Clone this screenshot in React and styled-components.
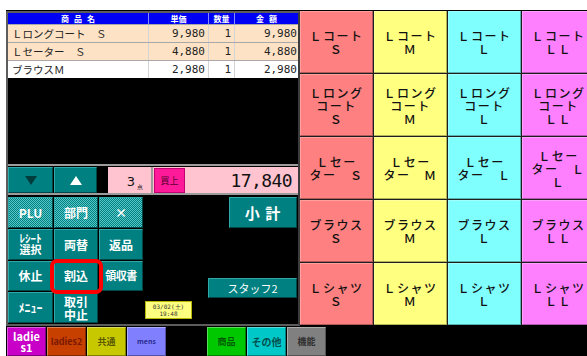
import React from 'react';
import styled, { createGlobalStyle } from 'styled-components';

const GlobalStyle = createGlobalStyle`
  html, body {
    margin: 0;
    padding: 0;
    background: #fff;
    overflow: hidden;
  }
  body {
    font-family: "Noto Sans CJK JP", "Noto Sans", sans-serif;
  }
`;

const items = [
  { name: 'Ｌロングコート　Ｓ', price: '9,980', qty: '1', total: '9,980', bg: '#fde2c6' },
  { name: 'Ｌセーター　Ｓ', price: '4,880', qty: '1', total: '4,880', bg: '#fde2c6' },
  { name: 'ブラウスＭ', price: '2,980', qty: '1', total: '2,980', bg: '#fff' },
];

const sizes = ['Ｓ', 'Ｍ', 'Ｌ', 'ＬＬ'];
const colColors = ['#ff8080', '#ffff80', '#80ffff', '#ff80ff'];

const productLabel = (row, size) => {
  if (row === 0) return `Ｌコート\n${size}`;
  if (row === 1) return `Ｌロング\nコート\n${size}`;
  if (row === 2) return size === 'ＬＬ' ? 'Ｌセー\nター　Ｌ\nＬ' : `Ｌセー\nター　${size}`;
  if (row === 3) return `ブラウス\n${size}`;
  return `Ｌシャツ\n${size}`;
};

const keys = [
  { label: 'PLU', dither: true },
  { label: '部門', dither: true },
  { label: '×', dither: true },
  { label: 'ﾚｼｰﾄ\n選択', small: true },
  { label: '両替' },
  { label: '返品' },
  { label: '休止' },
  { label: '割込', marked: true },
  { label: '領収書', tight: true },
  { label: 'ﾒﾆｭｰ' },
  { label: '取引\n中止' },
];

const tabs = [
  { label: 'ladie\ns1', bg: '#c800c8', fg: '#fff', size: 11 },
  { label: 'ladies2', bg: '#c84000', fg: '#7a1800', size: 9 },
  { label: '共通', bg: '#c8c800', fg: '#5a5a00', size: 9 },
  { label: 'mens', bg: '#8080ff', fg: '#2a2a90', size: 7 },
  { empty: true },
  { label: '商品', bg: '#00c800', fg: '#005a00', size: 9 },
  { label: 'その他', bg: '#00c8c8', fg: '#005050', size: 10 },
  { label: '機能', bg: '#808080', fg: '#2e2e2e', size: 9 },
];

const App = () => {
  return (
    <>
      <GlobalStyle />
      <Screen>
        <Frame>
          <Main>
            <LeftPanel>
              <Table>
                <HeaderRow>
                  <HeadCell wide>商品名</HeadCell>
                  <HeadCell>単価</HeadCell>
                  <HeadCell>数量</HeadCell>
                  <HeadCell wide>金額</HeadCell>
                </HeaderRow>
                {items.map((item) => (
                  <ItemRow key={item.name} bg={item.bg}>
                    <NameCell>{item.name}</NameCell>
                    <NumCell>{item.price}</NumCell>
                    <NumCell>{item.qty}</NumCell>
                    <NumCell>{item.total}</NumCell>
                  </ItemRow>
                ))}
              </Table>
              <BlankArea />
              <Bar>
                <ArrowButton width={45}>
                  <Triangle down />
                </ArrowButton>
                <ArrowButton width={43}>
                  <Triangle />
                </ArrowButton>
                <BarGap />
                <QtyBox>
                  3<QtyUnit>点</QtyUnit>
                </QtyBox>
                <BarDivider />
                <TotalBox>
                  <BuyButton>買上</BuyButton>
                  <TotalValue>17,840</TotalValue>
                </TotalBox>
              </Bar>
              <Lower>
                <Keypad>
                  {keys.map((k) => (
                    <Key key={k.label} dither={k.dither} small={k.small} tight={k.tight} marked={k.marked}>
                      {k.label}
                    </Key>
                  ))}
                </Keypad>
                <SideColumn>
                  <SubtotalButton>小 計</SubtotalButton>
                  <StaffButton>スタッフ2</StaffButton>
                  <DateBox>{'03/02(土)\n19:48'}</DateBox>
                </SideColumn>
              </Lower>
            </LeftPanel>
            <ProductGrid>
              {[0, 1, 2, 3, 4].map((row) =>
                sizes.map((size, col) => (
                  <ProductCell key={`${row}-${col}`} bg={colColors[col]}>
                    {productLabel(row, size)}
                  </ProductCell>
                ))
              )}
            </ProductGrid>
          </Main>
          <TabBar>
            {tabs.map((t, i) =>
              t.empty ? (
                <TabGap key={i} />
              ) : (
                <Tab key={i} bg={t.bg} fg={t.fg} size={t.size}>
                  {t.label}
                </Tab>
              )
            )}
          </TabBar>
        </Frame>
      </Screen>
    </>
  );
};

const Screen = styled.div`
  width: 587px;
  height: 356px;
  box-sizing: border-box;
  padding: 10px 0 0 6px;
  overflow: hidden;
  background: #fff;
`;

const Frame = styled.div`
  width: 600px;
  height: 346px;
  background: #000;
  display: flex;
  flex-direction: column;
`;

const Main = styled.div`
  display: flex;
  height: 316px;
`;

const LeftPanel = styled.div`
  width: 294px;
  height: 315px;
  margin-top: 1px;
  box-sizing: border-box;
  border: 2px solid #5c5c5c;
  border-right-color: #3c3c3c;
  display: flex;
  flex-direction: column;
  flex-shrink: 0;
  background: #000;
`;

const Table = styled.div`
  flex: none;
`;

const cols = `
  display: grid;
  grid-template-columns: 141px 60px 26px 1fr;
`;

const HeaderRow = styled.div`
  ${cols}
  height: 11px;
  background: #0000f4;
`;

const HeadCell = styled.div`
  color: #fff;
  font-size: 8px;
  font-weight: bold;
  line-height: 11px;
  text-align: center;
  letter-spacing: ${(p) => (p.wide ? '5px' : '0')};
  text-indent: ${(p) => (p.wide ? '5px' : '0')};
  border-right: 1px solid #8a8aff;
  &:last-child {
    border-right: none;
  }
`;

const ItemRow = styled.div`
  ${cols}
  height: 17px;
  border-top: 1px solid #a8a8a8;
  background: ${(p) => p.bg};
  color: #222;
`;

const NameCell = styled.div`
  font-size: 10.5px;
  line-height: 17px;
  padding-left: 4px;
  white-space: pre;
  border-right: 1px solid #d4d4d4;
`;

const NumCell = styled.div`
  font-family: "DejaVu Sans Mono", monospace;
  font-size: 11px;
  line-height: 17px;
  text-align: right;
  padding-right: 3px;
  border-right: 1px solid #d4d4d4;
  &:last-child {
    border-right: none;
    padding-right: 1px;
  }
`;

const BlankArea = styled.div`
  flex: 1;
  background: #000;
`;

const Bar = styled.div`
  display: flex;
  height: 26px;
  padding-top: 1px;
  border-top: 2px solid #9c9c9c;
  border-bottom: 2px solid #9c9c9c;
  background: #000;
`;

const ArrowButton = styled.div`
  width: ${(p) => p.width}px;
  margin-right: 1px;
  box-sizing: border-box;
  background: #008080;
  border: 1px solid;
  border-color: #30a8a8 #004848 #004848 #30a8a8;
  display: flex;
  align-items: center;
  justify-content: center;
`;

const Triangle = styled.div`
  width: 0;
  height: 0;
  border-left: 6px solid transparent;
  border-right: 6px solid transparent;
  ${(p) =>
    p.down
      ? 'border-top: 9px solid #003c3c;'
      : 'border-bottom: 9px solid #fff;'}
`;

const BarGap = styled.div`
  width: 10px;
`;

const QtyBox = styled.div`
  width: 43px;
  background: #ffc4cf;
  display: flex;
  align-items: flex-end;
  justify-content: flex-end;
  padding: 0 8px 2px 0;
  box-sizing: border-box;
  font-family: "DejaVu Sans", sans-serif;
  font-size: 13px;
  line-height: 18px;
  color: #111;
`;

const QtyUnit = styled.span`
  font-size: 6px;
  line-height: 8px;
  margin-left: 2px;
`;

const BarDivider = styled.div`
  width: 2px;
  background: #9c9c9c;
`;

const TotalBox = styled.div`
  flex: 1;
  display: flex;
  align-items: center;
  justify-content: space-between;
  background: #ffc4cf;
  padding: 0 6px 0 1px;
`;

const BuyButton = styled.div`
  width: 31px;
  height: 25px;
  box-sizing: border-box;
  background: #ff1a9a;
  border: 1px solid #c00070;
  color: #5a0030;
  font-size: 9px;
  line-height: 23px;
  text-align: center;
`;

const TotalValue = styled.div`
  font-family: "DejaVu Sans Mono", monospace;
  font-size: 18px;
  letter-spacing: -0.6px;
  color: #111;
`;

const Lower = styled.div`
  display: flex;
  height: 126px;
  padding: 2px 0 1px 0;
  background: #000;
`;

const Keypad = styled.div`
  display: grid;
  grid-template-columns: 45px 44px 44px;
  grid-template-rows: repeat(4, 1fr);
  gap: 1px;
`;

const Key = styled.div`
  position: relative;
  box-sizing: border-box;
  display: flex;
  align-items: center;
  justify-content: center;
  text-align: center;
  white-space: pre-line;
  color: #fff;
  font-weight: bold;
  font-size: ${(p) => (p.small ? '11px' : p.tight ? '11px' : '12px')};
  line-height: ${(p) => (p.small ? '11px' : '13px')};
  letter-spacing: ${(p) => (p.tight ? '-0.5px' : '0')};
  background: ${(p) =>
    p.dither
      ? 'repeating-conic-gradient(#008080 0% 25%, #56c6c6 0% 50%) 0 0 / 2px 2px'
      : '#008080'};
  border: 1px solid;
  border-color: #30a8a8 #004848 #004848 #30a8a8;
  ${(p) =>
    p.marked &&
    `
    &::after {
      content: '';
      position: absolute;
      top: -3px;
      right: -6px;
      bottom: -4px;
      left: -5px;
      border: 4px solid #ff0000;
      border-radius: 7px;
      z-index: 1;
    }
  `}
`;

const SideColumn = styled.div`
  flex: 1;
  display: flex;
  flex-direction: column;
  margin-left: 2px;
  padding-right: 1px;
`;

const SubtotalButton = styled.div`
  align-self: flex-end;
  width: 68px;
  height: 31px;
  box-sizing: border-box;
  background: #008080;
  border: 1px solid;
  border-color: #30a8a8 #004848 #004848 #30a8a8;
  color: #fff;
  font-weight: bold;
  font-size: 15px;
  line-height: 29px;
  text-align: center;
  letter-spacing: 1px;
`;

const StaffButton = styled.div`
  align-self: flex-end;
  margin-top: auto;
  width: 89px;
  height: 20px;
  box-sizing: border-box;
  background: #008080;
  border: 1px solid;
  border-color: #30a8a8 #004848 #004848 #30a8a8;
  color: #fff;
  font-size: 11px;
  line-height: 18px;
  text-align: center;
`;

const DateBox = styled.div`
  align-self: flex-start;
  margin: 3px 0 4px 0;
  width: 47px;
  height: 18px;
  box-sizing: border-box;
  background: #ffff80;
  border: 1px solid #b8b800;
  color: #333;
  font-family: "DejaVu Sans Mono", monospace;
  font-size: 6px;
  line-height: 7px;
  padding-top: 1px;
  text-align: center;
  white-space: pre-line;
`;

const ProductGrid = styled.div`
  display: grid;
  grid-template-columns: repeat(4, 73px);
  grid-template-rows: repeat(5, 1fr);
  gap: 1px;
  height: 314px;
  margin-top: 1px;
  background: #1e1e1e;
  flex-shrink: 0;
`;

const ProductCell = styled.div`
  display: flex;
  align-items: center;
  justify-content: center;
  text-align: center;
  white-space: pre-line;
  background: ${(p) => p.bg};
  color: #111;
  font-size: 12px;
  font-weight: 500;
  line-height: 13px;
  letter-spacing: 1.5px;
  box-shadow: inset -1px -1px 0 rgba(0, 0, 0, 0.3), inset 1px 1px 0 rgba(255, 255, 255, 0.25);
`;

const TabBar = styled.div`
  display: flex;
  height: 30px;
  padding: 1px 0 0 1px;
  box-sizing: border-box;
  background: #000;
`;

const Tab = styled.div`
  width: 39px;
  margin-right: 1px;
  box-sizing: border-box;
  display: flex;
  align-items: center;
  justify-content: center;
  text-align: center;
  white-space: pre-line;
  background: ${(p) => p.bg};
  color: ${(p) => p.fg};
  font-size: ${(p) => p.size}px;
  font-weight: bold;
  line-height: 11px;
  border: 1px solid;
  border-color: rgba(255, 255, 255, 0.35) rgba(0, 0, 0, 0.35) rgba(0, 0, 0, 0.35) rgba(255, 255, 255, 0.35);
`;

const TabGap = styled.div`
  width: 40px;
`;

export default App;
